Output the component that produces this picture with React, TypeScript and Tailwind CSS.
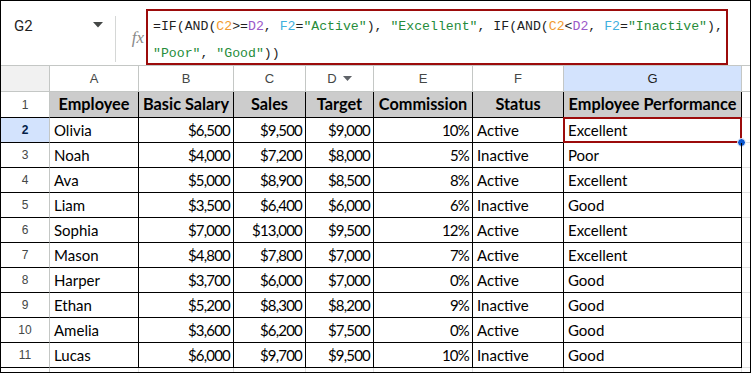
import React from "react";

type Row = {
  name: string;
  salary: string;
  sales: string;
  target: string;
  commission: string;
  status: string;
  perf: string;
};

const rows: Row[] = [
  { name: "Olivia", salary: "$6,500", sales: "$9,500", target: "$9,000", commission: "10%", status: "Active", perf: "Excellent" },
  { name: "Noah", salary: "$4,000", sales: "$7,200", target: "$8,000", commission: "5%", status: "Inactive", perf: "Poor" },
  { name: "Ava", salary: "$5,000", sales: "$8,900", target: "$8,500", commission: "8%", status: "Active", perf: "Excellent" },
  { name: "Liam", salary: "$3,500", sales: "$6,400", target: "$6,000", commission: "6%", status: "Inactive", perf: "Good" },
  { name: "Sophia", salary: "$7,000", sales: "$13,000", target: "$9,500", commission: "12%", status: "Active", perf: "Excellent" },
  { name: "Mason", salary: "$4,800", sales: "$7,800", target: "$7,000", commission: "7%", status: "Active", perf: "Excellent" },
  { name: "Harper", salary: "$3,700", sales: "$6,000", target: "$7,000", commission: "0%", status: "Active", perf: "Good" },
  { name: "Ethan", salary: "$5,200", sales: "$8,300", target: "$8,200", commission: "9%", status: "Inactive", perf: "Good" },
  { name: "Amelia", salary: "$3,600", sales: "$6,200", target: "$7,500", commission: "0%", status: "Active", perf: "Good" },
  { name: "Lucas", salary: "$6,000", sales: "$9,700", target: "$9,500", commission: "10%", status: "Inactive", perf: "Good" },
];

const grid = "grid grid-cols-[49px_89px_95px_72px_68px_99px_91px_178px_1fr]";
const cell = "border-r border-b border-black flex items-center text-[15px] text-black";
const num = `${cell} justify-end pr-[3px] tracking-[-0.8px]`;

function FormulaBar() {
  const o = "text-[#f29a2e]";
  const p = "text-[#9b59c9]";
  const b = "text-[#3fb0de]";
  const g = "text-[#268c3a]";
  return (
    <div className="h-[65px] border-b border-[#c4c7c5] flex items-start">
      {/* name box */}
      <div className="w-[114px] shrink-0 h-full flex items-start pt-[14px] pl-[13px] pr-[12px]">
        <span className="text-[15px] text-[#1f1f1f] font-['Roboto',sans-serif]">G2</span>
        <svg className="ml-auto mt-[7px]" width="10" height="6" viewBox="0 0 10 6">
          <path d="M0 0h10L5 5.5z" fill="#444746" />
        </svg>
      </div>
      <div className="w-px shrink-0 h-[46px] mt-[15px] bg-[#d5d7d6]" />
      <div className="w-[30px] shrink-0 h-full flex items-center justify-end pr-[2px] pt-[10px]">
        <span className="italic text-[17px] text-[#8a8a8a] font-['Liberation_Serif',serif]">fx</span>
      </div>
      {/* formula */}
      <div className="mt-[8px] w-[582px] shrink-0 h-[56px] overflow-hidden border-2 border-[#9c0b0b] pl-[5px] pt-[2px] font-['Liberation_Mono',monospace] text-[13.2px] leading-[27px] text-[#1f1f1f] whitespace-pre">
        <div>
          =IF(AND(<span className={o}>C2</span>&gt;=<span className={p}>D2</span>, <span className={b}>F2</span>=<span className={g}>"Active"</span>), <span className={g}>"Excellent"</span>, IF(AND(<span className={o}>C2</span>&lt;<span className={p}>D2</span>, <span className={b}>F2</span>=<span className={g}>"Inactive"</span>),
        </div>
        <div>
          <span className={g}>"Poor"</span>, <span className={g}>"Good"</span>))
        </div>
      </div>
    </div>
  );
}

function ColumnHeaders() {
  const letters = ["A", "B", "C", "D", "E", "F"];
  return (
    <div className={`${grid} h-[26px] font-['Liberation_Sans',sans-serif] text-[13px] text-[#444746]`}>
      <div className="bg-[#f1f1f1] border-r border-b border-[#c4c7c5]" />
      {letters.map((l) => (
        <div key={l} className="border-r border-b border-[#c4c7c5] flex items-center justify-center gap-[6px]">
          {l}
          {l === "D" && (
            <svg width="9" height="5" viewBox="0 0 9 5">
              <path d="M0 0h9L4.5 5z" fill="#5f6368" />
            </svg>
          )}
        </div>
      ))}
      <div className="bg-[#d3e3fd] border-r border-b border-[#c4c7c5] flex items-center justify-center text-[#1f1f1f]">G</div>
      <div className="border-b border-[#c4c7c5]" />
    </div>
  );
}

export default function App() {
  return (
    <div className="w-[751px] h-[373px] border border-black bg-white overflow-hidden font-['Lato',sans-serif]">
      <FormulaBar />
      <ColumnHeaders />

      {/* header row 1 */}
      <div className={`${grid} h-[26px]`}>
        <div className="border-r border-[#c4c7c5] border-b border-b-black flex items-center justify-center text-[12px] text-[#444746] font-['Liberation_Sans',sans-serif]">1</div>
        {["Employee", "Basic Salary", "Sales", "Target", "Commission", "Status", "Employee Performance"].map((h) => (
          <div key={h} className={`${cell} bg-[#cccccc] justify-center font-bold text-[16.3px] whitespace-nowrap`}>
            {h}
          </div>
        ))}
        <div className="border-b border-[#e1e1e1]" />
      </div>

      {rows.map((r, i) => {
        const n = i + 2;
        const active = n === 2;
        return (
          <div key={r.name} className={`${grid} h-[25px]`}>
            <div
              className={`border-r border-[#c4c7c5] border-b border-b-black flex items-center justify-center text-[12px] font-['Liberation_Sans',sans-serif] ${
                active ? "bg-[#d3e3fd] text-[#041e49] font-bold" : "text-[#444746]"
              }`}
            >
              {n}
            </div>
            <div className={`${cell} pl-[4px]`}>{r.name}</div>
            <div className={num}>{r.salary}</div>
            <div className={num}>{r.sales}</div>
            <div className={num}>{r.target}</div>
            <div className={num}>{r.commission}</div>
            <div className={`${cell} pl-[4px]`}>{r.status}</div>
            <div className={`${cell} pl-[4px] relative`}>
              {r.perf}
              {active && (
                <>
                  <div className="absolute -left-[1px] -top-[1px] -right-[1px] -bottom-[1px] border-2 border-[#9c0b0b]" />
                  <div className="absolute -right-[5px] -bottom-[5px] w-[9px] h-[9px] rounded-full bg-[#0b57d0] border border-white" />
                </>
              )}
            </div>
            <div className="border-b border-[#e1e1e1]" />
          </div>
        );
      })}

      {/* partial next row */}
      <div className={`${grid} h-[4px]`}>
        <div className="border-r border-[#c4c7c5]" />
        <div className="border-r border-[#e1e1e1]" />
        <div className="border-r border-[#e1e1e1]" />
        <div className="border-r border-[#e1e1e1]" />
        <div className="border-r border-[#e1e1e1]" />
        <div className="border-r border-[#e1e1e1]" />
        <div className="border-r border-[#e1e1e1]" />
        <div className="border-r border-[#e1e1e1]" />
        <div />
      </div>
    </div>
  );
}
